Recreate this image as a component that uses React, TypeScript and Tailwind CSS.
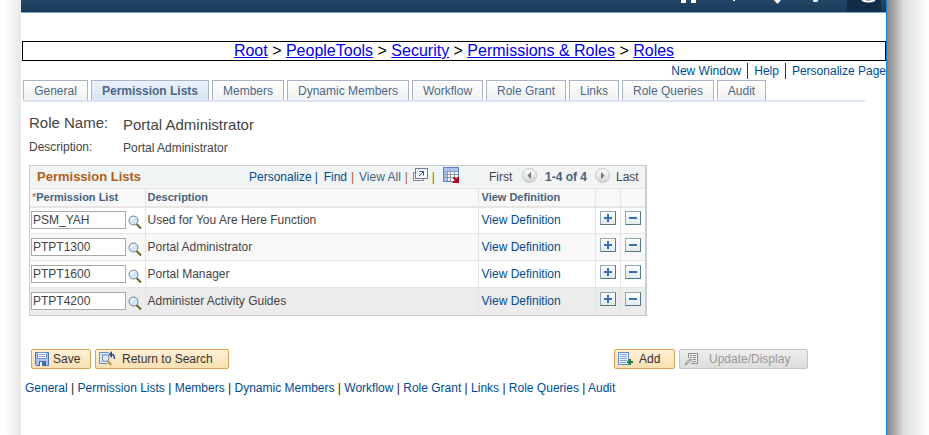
import React from "react";

const tabs = [
  { label: "General", width: "w-[65px]" },
  { label: "Permission Lists", width: "w-[118px]", active: true },
  { label: "Members", width: "w-[72px]" },
  { label: "Dynamic Members", width: "w-[122px]" },
  { label: "Workflow", width: "w-[71px]" },
  { label: "Role Grant", width: "w-[80px]" },
  { label: "Links", width: "w-[50px]" },
  { label: "Role Queries", width: "w-[92px]" },
  { label: "Audit", width: "w-[49px]" },
];

const rows = [
  { id: "PSM_YAH", description: "Used for You Are Here Function", bg: "bg-white" },
  { id: "PTPT1300", description: "Portal Administrator", bg: "bg-[#f8f8f8]" },
  { id: "PTPT1600", description: "Portal Manager", bg: "bg-white" },
  { id: "PTPT4200", description: "Administer Activity Guides", bg: "bg-[#ececec]" },
];

const crumbs = ["Root", "PeopleTools", "Security", "Permissions & Roles", "Roles"];

function SearchIcon() {
  return (
    <svg width="14" height="14" viewBox="0 0 14 14" fill="none">
      <path d="M8.5 9l4.500 4.500" stroke="#6b6420" strokeWidth="2" />
      <circle cx="5.500" cy="5.500" r="4.500" fill="#cfe6fb" stroke="#76808c" />
      <path d="M3 6a3 3 0 0 1 3-3" stroke="#fff" strokeWidth="1.500" />
    </svg>
  );
}

function PopupIcon() {
  return (
    <svg width="15" height="14" viewBox="0 0 15 14" fill="none">
      <path d="M2.500 4.500h-2v8h10v-2" stroke="#7c8795" />
      <rect x="2.500" y=".5" width="12" height="10" fill="#f3f8fc" stroke="#6a809f" />
      <path d="M6 8l4.500-4.500M6.500 3.500h4v4" stroke="#45597a" />
    </svg>
  );
}

function GridIcon() {
  return (
    <svg width="17" height="16" viewBox="0 0 17 16" fill="none">
      <rect x=".5" y=".5" width="15" height="14" fill="#f5f8fc" />
      <path d="M1 1h14v3H1zM1 4h3v10H1z" fill="#a9c3ee" />
      <path d="M1 4.500h14M1 7.500h14M1 10.500h14M4.500 4v11M7.500 4v11M11.500 4v11" stroke="#8a98b0" />
      <rect x=".5" y=".5" width="15" height="14" stroke="#5c82cc" />
      <path d="M10.500 10.500l3 3M15 11.500V15h-3.500z" fill="#b80010" stroke="#b80010" strokeWidth="2" />
    </svg>
  );
}

function PageArrow({ left = false }: { left?: boolean }) {
  return (
    <svg width="15" height="15" viewBox="0 0 15 15">
      <defs>
        <linearGradient id="disc" x2="0" y2="1">
          <stop stopColor="#fff" />
          <stop offset="1" stopColor="#d2d2d2" />
        </linearGradient>
      </defs>
      <circle cx="7.500" cy="7.500" r="7" fill="url(#disc)" stroke="#c4c4c4" />
      <path d={left ? "M9 4v7L5.500 7.500z" : "M6 4v7l3.500-3.500z"} fill="#777" />
    </svg>
  );
}

function SaveIcon() {
  return (
    <svg width="14" height="14" viewBox="0 0 14 14" fill="none">
      <path d="M.5.5h13v13H1.500l-1-1z" fill="#a8c5f2" stroke="#4a70b8" />
      <path d="M2.500.5h9v6h-9z" fill="#fff" stroke="#6d92d8" />
      <path d="M4 2.500h6M4 4.500h6" stroke="#7da3e4" />
      <path d="M4 9h7v5H4z" fill="#4668a6" />
      <path d="M5 10h2v4H5z" fill="#fff" />
    </svg>
  );
}

function ReturnIcon() {
  return (
    <svg width="17" height="15" viewBox="0 0 17 15" fill="none">
      <path d="M10 1.500H.5v11h8" fill="#e8f0fc" stroke="#658dd0" />
      <path d="M2 3.500h2M2 10.500h2" stroke="#8cafe4" />
      <circle cx="6.500" cy="7" r="3.500" fill="#d9ebfd" stroke="#718299" />
      <path d="M9 10l3 4" stroke="#aa9330" strokeWidth="2" />
      <path d="M15.500 8c0-3-1-4.500-3-4.500h-1" stroke="#294e89" strokeWidth="1.500" />
      <path d="M13 0v7L9.500 3.500z" fill="#294e89" />
    </svg>
  );
}

function AddIcon() {
  return (
    <svg width="15" height="14" viewBox="0 0 15 14" fill="none">
      <rect x=".5" y=".5" width="10" height="12" fill="#eff5ff" stroke="#6589ca" />
      <path d="M2 2.500h7M2 4.500h7M2 6.500h7M2 8.500h7M2 10.500h6" stroke="#82a7e4" />
      <path d="M12 7v6M9 10h6" stroke="#218331" strokeWidth="2" />
    </svg>
  );
}

function UpdateIcon() {
  return (
    <svg width="14" height="14" viewBox="0 0 14 14" fill="none">
      <path d="M4.500 6V1.500h9v10H7" fill="#eee" stroke="#888" />
      <path d="M6 3.500h2M9 3.500h3M6 5.500h2M9 5.500h3M9 7.500h3M8 9.500h4" stroke="#8d8d8d" />
      <path d="M1 12.500l2-3 4-3 1 1-4 4z" fill="#ddd" stroke="#888" />
    </svg>
  );
}

function PeopleHeader() {
  return (
    <header className="flex h-[13px] justify-end border-b border-[#75a9d9] bg-linear-to-b from-[#23486a] to-[#1b3a55]">
      <svg width="206" height="12" viewBox="680 0 206 12" fill="none" aria-hidden="true">
        <path d="M847 0h34v12h-34z" fill="#112d45" />
        <path d="M681 0h5v3h-5zM691 0h5v3h-5z" fill="#fff" />
        <path d="M733 0h2v1h-2zM774 0h7l-3.500 4zM813 0h5v1l-1 1h-3l-1-1z" fill="#fff" />
        <path d="M862 0q6.500 3 13 0" stroke="#fff" strokeWidth="2" />
      </svg>
    </header>
  );
}

function RowButton({ minus = false }: { minus?: boolean }) {
  return (
    <button aria-label={minus ? "Delete row" : "Add row"} className="block h-[14px] w-4 border border-t-[#91a8af] border-r-[#577780] border-b-[#577780] border-l-[#91a8af] bg-linear-to-b from-white to-[#e1eaec]">
      <svg width="14" height="12" viewBox="0 0 14 12" fill="none">
        <path d={minus ? "M3 6h8" : "M3 6h8M7 2v8"} stroke="#3970b1" strokeWidth="2" />
      </svg>
    </button>
  );
}

const gold = "flex h-5 items-center rounded-[2px] border border-[#dca34e] bg-linear-to-b from-[#fff0d9] to-[#f9dfb1] text-[#333]";

export default function App() {
  return (
    <div className="overflow-hidden bg-white font-['Liberation_Sans',Arial,sans-serif] text-xs leading-4 text-[#444]">
      <div className="flex min-h-screen">
        <div className="w-[21px] shrink-0 bg-linear-to-r from-white from-20% to-[#e8e8e8]" />
        <div className="min-w-0 flex-1 border-r border-[#1b7fd0]">
          <PeopleHeader />
          <nav aria-label="Breadcrumb" className="mt-7 ml-px h-5 border border-black text-center text-base leading-[18px] text-black">
            {crumbs.map((crumb, i) => (
              <React.Fragment key={crumb}>
                {i > 0 && " > "}
                <a href="#" className="text-[#0000ee] underline">{crumb}</a>
              </React.Fragment>
            ))}
          </nav>
          <nav aria-label="Page" className="mt-[2px] flex h-4 justify-end text-[#004b91]">
            <a href="#" className="border-r border-[#333] pr-[6px]">New Window</a>
            <a href="#" className="border-r border-[#333] px-[6px]">Help</a>
            <a href="#" className="pl-[6px]">Personalize Page</a>
          </nav>
          <nav aria-label="Role pages" className="mt-px mr-[21px] ml-[2px] flex gap-[3px] border-b-2 border-[#d9e4f2] whitespace-nowrap">
            {tabs.map((tab) => (
              <button key={tab.label} className={`${tab.width} h-5 shrink-0 border border-b-0 border-[#aab4c8] bg-linear-to-b ${tab.active ? "from-[#edf2fa] to-[#d8e4f4] font-bold" : "from-white to-[#f2f2f2]"} text-[#4b6788]`}>
                {tab.label}
              </button>
            ))}
          </nav>
          <main className="pt-[11px] pl-2">
            <dl className="grid grid-cols-[94px_1fr]">
              <dt className="text-[15px] leading-5">Role Name:</dt>
              <dd className="pt-[2px] text-[15px] leading-5">Portal Administrator</dd>
              <dt className="pt-1">Description:</dt>
              <dd className="pt-[5px] leading-4">Portal Administrator</dd>
            </dl>
            <section className="mt-[9px] w-[618px] border border-r-2 border-[#c8cdd3]">
              <div className="flex h-[22px] items-center bg-[#f0f4f5] whitespace-nowrap">
                <h2 className="w-[211px] pl-[7px] text-[13px] font-bold text-[#b25d16]">Permission Lists</h2>
                <div className="flex w-[248px] items-center pl-2 text-[#004b91]">
                  <a href="#">Personalize</a><span className="w-3 pl-[3px]">|</span>
                  <a href="#">Find</a><span className="w-3 pl-1 text-[#b05c16]">|</span>
                  <span className="text-[#47627d]">View All</span><span className="w-3 pl-1 text-[#b05c16]">|</span>
                  <button aria-label="Open in new window" className="pb-1"><PopupIcon /></button><span className="w-[15px] pl-1 text-[#b05c16]">|</span>
                  <button aria-label="Download table" className="pb-1"><GridIcon /></button>
                </div>
                <div className="flex items-center">
                  <span className="w-[33px]">First</span>
                  <button aria-label="Previous page" className="pb-1"><PageArrow left /></button>
                  <strong className="w-[58px] text-center text-[#47627d]">1-4 of 4</strong>
                  <button aria-label="Next page" className="pb-1"><PageArrow /></button>
                  <span className="pl-[6px]">Last</span>
                </div>
              </div>
              <table className="w-full table-fixed border-collapse text-left">
                <colgroup>
                  <col className="w-[115px]" />
                  <col />
                  <col className="w-[117px]" />
                  <col className="w-[25px]" />
                  <col className="w-[25px]" />
                </colgroup>
                <thead className="bg-[#f8f8f8] text-[11px] text-[#47627d]">
                  <tr className="h-[18px] border-t border-b-2 border-[#e5e5e5]">
                    <th className="pl-[2px]"><span className="font-normal text-[#b25d16]">*</span>Permission List</th>
                    <th className="border-l border-[#e5e5e5] pl-[2px]">Description</th>
                    <th className="border-l border-[#e5e5e5] pl-[3px]">View Definition</th>
                    <th className="border-l border-[#e5e5e5]" />
                    <th className="border-l border-[#e5e5e5]" />
                  </tr>
                </thead>
                <tbody>
                  {rows.map((row) => (
                    <tr key={row.id} className={`h-[27px] border-b border-[#e5e5e5] last:border-b-0 ${row.bg}`}>
                      <td className="p-0 pl-px">
                        <div className="flex items-center gap-[2px]">
                          <input aria-label="Permission List" defaultValue={row.id} className="h-[18px] w-[95px] border border-[#aaa] bg-white px-px" />
                          <button aria-label="Look up permission list" className="pt-1"><SearchIcon /></button>
                        </div>
                      </td>
                      <td className="border-l border-[#e5e5e5] p-0 pl-[2px]">{row.description}</td>
                      <td className="border-l border-[#e5e5e5] p-0 pl-[3px]"><a href="#" className="text-[#004b91]">View Definition</a></td>
                      <td className="border-l border-[#e5e5e5] p-0 pb-[5px] pl-1"><RowButton /></td>
                      <td className="border-l border-[#e5e5e5] p-0 pb-[5px] pl-1"><RowButton minus /></td>
                    </tr>
                  ))}
                </tbody>
              </table>
            </section>
            <div className="mt-[33px] ml-[2px] flex w-[777px]">
              <button className={`${gold} w-[60px] gap-1 pl-[3px]`}><SaveIcon />Save</button>
              <button className={`${gold} ml-1 w-[134px] gap-[6px] pl-[3px]`}><ReturnIcon />Return to Search</button>
              <button className={`${gold} ml-auto w-[61px] gap-[6px] pl-[3px]`}><AddIcon />Add</button>
              <button disabled className="ml-1 flex h-5 w-[129px] items-center gap-[11px] rounded-[2px] border border-[#c5c5c5] bg-linear-to-b from-[#eee] to-[#ddd] pl-1 text-[#999]"><UpdateIcon />Update/Display</button>
            </div>
            <nav aria-label="Role page links" className="mt-[11px] -ml-1 text-[#004b91]">
              {tabs.map((tab, i) => (
                <React.Fragment key={tab.label}>
                  {i > 0 && <span className="text-[#222]"> | </span>}
                  <a href="#">{tab.label}</a>
                </React.Fragment>
              ))}
            </nav>
          </main>
        </div>
        <div className="w-[42px] shrink-0 bg-linear-to-r from-[#858585] via-[#ddd] via-40% to-white" />
      </div>
    </div>
  );
}
